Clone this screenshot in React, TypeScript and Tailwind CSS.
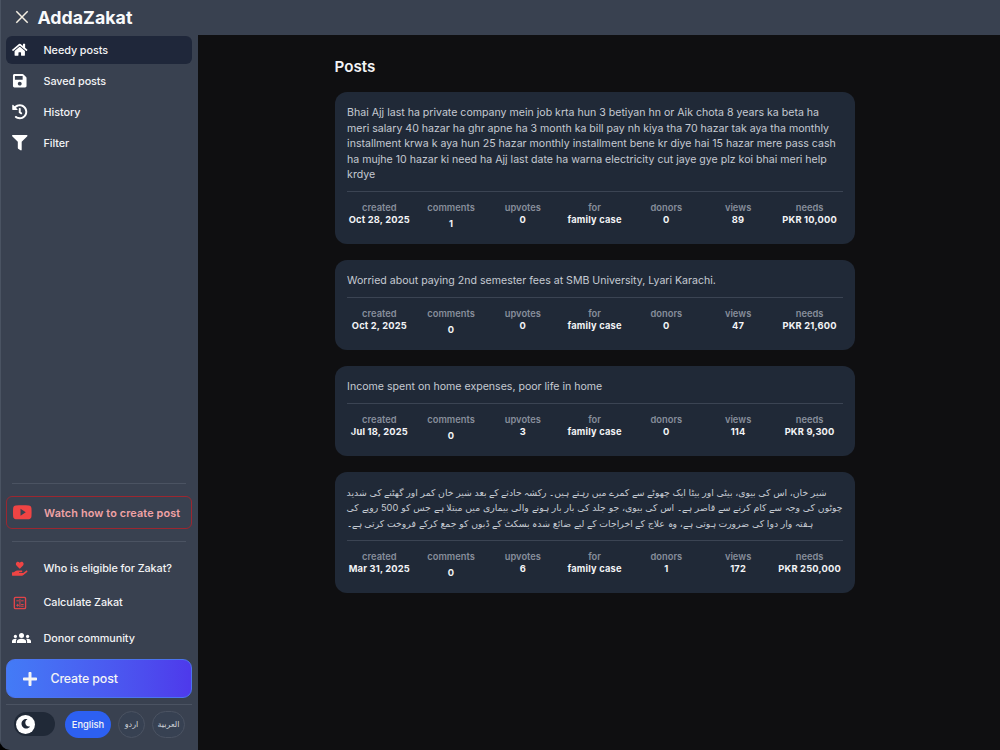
import { FaFilter, FaHandHoldingHeart, FaHistory, FaHome, FaMoon, FaPlus, FaSave } from "react-icons/fa";
import { IoLogoYoutube } from "react-icons/io";

type Post = {
    text?: string;
    lines?: { text: string; width: string }[];
    created: string;
    comments: number;
    upvotes: number;
    donors: number;
    views: number;
    needs: string;
};

const posts: Post[] = [
    {
        text: "Bhai Ajj last ha private company mein job krta hun 3 betiyan hn or Aik chota 8 years ka beta ha meri salary 40 hazar ha ghr apne ha 3 month ka bill pay nh kiya tha 70 hazar tak aya tha monthly installment krwa k aya hun 25 hazar monthly installment bene kr diye hai 15 hazar mere pass cash ha mujhe 10 hazar ki need ha Ajj last date ha warna electricity cut jaye gye plz koi bhai meri help krdye",
        created: "Oct 28, 2025",
        comments: 1,
        upvotes: 0,
        donors: 0,
        views: 89,
        needs: "PKR 10,000",
    },
    {
        text: "Worried about paying 2nd semester fees at SMB University, Lyari Karachi.",
        created: "Oct 2, 2025",
        comments: 0,
        upvotes: 0,
        donors: 0,
        views: 47,
        needs: "PKR 21,600",
    },
    {
        text: "Income spent on home expenses, poor life in home",
        created: "Jul 18, 2025",
        comments: 0,
        upvotes: 3,
        donors: 0,
        views: 114,
        needs: "PKR 9,300",
    },
    {
        lines: [
            { text: "شیر خان، اس کی بیوی، بیٹی اور بیٹا ایک چھوٹے سے کمرے میں رہتے ہیں۔ رکشہ حادثے کے بعد شیر خان کمر اور گھٹنے کی شدید", width: "w-[480px]" },
            { text: "چوٹوں کی وجہ سے کام کرنے سے قاصر ہے۔ اس کی بیوی، جو جلد کی بار بار ہونے والی بیماری میں مبتلا ہے جس کو 500 روپے کی", width: "w-[496px]" },
            { text: "ہفتہ وار دوا کی ضرورت ہوتی ہے، وہ علاج کے اخراجات کے لیے ضائع شدہ بسکٹ کے ڈبوں کو جمع کرکے فروخت کرتی ہے۔", width: "w-[466px]" },
        ],
        created: "Mar 31, 2025",
        comments: 0,
        upvotes: 6,
        donors: 1,
        views: 172,
        needs: "PKR 250,000",
    },
];

const navItems = [
    { label: "Needy posts", icon: FaHome, active: true },
    { label: "Saved posts", icon: FaSave },
    { label: "History", icon: FaHistory },
    { label: "Filter", icon: FaFilter },
];

function CalculatorIcon() {
    return (
        <svg viewBox="0 0 16 16" className="size-[15.5px] text-[#e04449]" fill="none" stroke="currentColor">
            <rect x="2.4" y="2.4" width="11.6" height="11.6" rx="1.2" strokeWidth="1.4" />
            <path d="M4.5 6h2.6M9.4 6H12M5.8 9.2v2.8M4.4 10.6h2.8M9.4 9.8H12M9.4 11.6H12M8.2 4v8.5" strokeWidth="1" />
        </svg>
    );
}

function GroupIcon() {
    return (
        <svg viewBox="0 0 19 10" className="h-[10px] w-[19px] text-white" fill="currentColor">
            <circle cx="9.5" cy="2.6" r="2.5" />
            <circle cx="3.4" cy="3.4" r="1.6" />
            <circle cx="15.6" cy="3.4" r="1.6" />
            <path d="M4.9 10V8.6C4.9 6.8 7 5.8 9.5 5.8s4.6 1 4.6 2.8V10z" />
            <path d="M0 10V8.2c0-1.5 1.4-2.4 3.4-2.4.5 0 .9 0 1.3.1C4.1 6.6 3.9 7.500 3.900 8.4V10z" />
            <path d="M19 10V8.2c0-1.500-1.400-2.400-3.400-2.400-.5 0-.9 0-1.300.1.600.700.800 1.600.800 2.500V10z" />
        </svg>
    );
}

function Stat({ label, value, low }: { label: string; value: string | number; low?: boolean }) {
    return (
        <div className="flex flex-col items-center whitespace-nowrap text-[9.3px] leading-[12.4px] tracking-[0.02em]">
            <span className="font-semibold text-[#878e9b] tracking-[0.005em]">{label}</span>
            <span className={low ? "pt-[4px] font-bold text-[#f3f4f6]" : "font-bold text-[#f3f4f6]"}>{value}</span>
        </div>
    );
}

function PostCard({ post }: { post: Post }) {
    return (
        <article className="rounded-[12px] bg-[#202937] px-[12px] pt-[13px] pb-[12px]">
            {post.text && (
                <p className="pl-[0.5px] text-[10.58px] leading-[15.5px] text-[#c5cad2]">{post.text}</p>
            )}
            {post.lines && (
                <div dir="rtl" className="flex flex-col items-end font-['Inter','DejaVu_Sans',sans-serif] text-[9.3px] leading-[15.5px] text-[#c5cad2]">
                    {post.lines.map((line) => (
                        <p key={line.text} className={`${line.width} h-[15.5px] whitespace-nowrap [text-align-last:justify]`}>
                            {line.text}
                        </p>
                    ))}
                </div>
            )}
            <div className="mt-[8.4px] grid h-[41px] grid-cols-[65.5px_78px_65.5px_78px_65.5px_78px_65px] border-t border-[#3b4453] pt-[10px]">
                <Stat label="created" value={post.created} />
                <Stat label="comments" value={post.comments} low />
                <Stat label="upvotes" value={post.upvotes} />
                <Stat label="for" value="family case" />
                <Stat label="donors" value={post.donors} />
                <Stat label="views" value={post.views} />
                <Stat label="needs" value={post.needs} />
            </div>
        </article>
    );
}

function Sidebar() {
    return (
        <aside className="flex w-[198px] flex-col border-l border-[#4a5362] bg-[#394150] pr-[6px] pl-[5px] text-[10.85px] font-medium tracking-[-0.08px] text-[#f3f4f6]">
            <nav className="flex flex-col gap-[3px] pt-[1px]">
                {navItems.map(({ label, icon: Icon, active }) => (
                    <a
                        key={label}
                        className={`flex h-7 items-center gap-4 rounded-[6px] pl-[6px] ${active ? "bg-[#1f273a]" : ""}`}
                    >
                        <Icon className="size-[15.5px] text-white" />
                        {label}
                    </a>
                ))}
            </nav>
            <div className="mt-auto flex flex-col">
                <hr className="mx-[6px] border-[#4b5362]" />
                <a className="mt-3 flex h-[33px] items-center gap-[12.5px] rounded-[6px] border border-[#9c2730] pl-[6px] font-semibold tracking-[0.12px] text-[#f0a3a6]">
                    <IoLogoYoutube className="size-[18.6px] text-[#ef4444]" />
                    <span className="pt-px">Watch how to create post</span>
                </a>
                <hr className="mx-[6px] mt-3 border-[#4b5362]" />
                <a className="mt-[10.5px] flex h-8 items-center gap-4 pl-[6px]">
                    <FaHandHoldingHeart className="size-[15.5px] text-[#ef4444]" />
                    Who is eligible for Zakat?
                </a>
                <a className="mt-[2px] flex h-8 items-center gap-4 pl-[6px]">
                    <CalculatorIcon />
                    Calculate Zakat
                </a>
                <a className="mt-[3.5px] flex h-8 items-center gap-[12.5px] pl-[6px]">
                    <GroupIcon />
                    Donor community
                </a>
                <button className="mt-[5px] flex h-[39px] items-center gap-[12px] rounded-[9px] border border-[#4b74f0] bg-linear-to-r from-[#437bf6] to-[#4e39eb] pl-[14.5px] text-[12.4px] font-medium tracking-[-0.14px]">
                    <FaPlus className="size-[16px]" />
                    <span className="pt-[2px] pl-px">Create post</span>
                </button>
                <div className="mt-[6px] flex h-[46px] items-start border-t border-[#4b5362] pt-[6px] pl-[8px] text-[9.3px]">
                    <div className="mt-px flex h-[24px] w-[41px] items-center rounded-full bg-[#202937] pl-[2px]">
                        <span className="flex size-[19px] items-center justify-center rounded-full bg-white text-[#202937]">
                            <FaMoon className="size-[9.5px]" />
                        </span>
                    </div>
                    <span className="ml-[10px] flex h-[27px] w-[46px] items-center justify-center rounded-full bg-[#2d60f1] tracking-[0.03px]">English</span>
                    <span className="ml-[7px] flex h-[27px] w-[27px] items-center justify-center rounded-full border border-[#4b5362] bg-[#374152] font-['DejaVu_Sans',sans-serif] text-[8px] text-[#d1d5db] tracking-normal">اردو</span>
                    <span className="ml-[7px] flex h-[27px] w-[33px] items-center justify-center rounded-full border border-[#4b5362] bg-[#374152] font-['DejaVu_Sans',sans-serif] text-[8px] text-[#d1d5db] tracking-normal">العربية</span>
                </div>
            </div>
        </aside>
    );
}

export default function App() {
    return (
        <div className="flex h-[750px] w-[1000px] flex-col overflow-hidden rounded-bl-[10px] bg-[#0f0f11] font-['Inter',sans-serif] shadow-[0_0_0_20px_#000]">
            <header className="flex h-[35px] shrink-0 items-center gap-[8.5px] border-l border-[#4a5362] bg-[#394150] pl-[14px]">
                <svg viewBox="0 0 14 14" className="mb-px size-[14px]" fill="none" stroke="#f4efe2" strokeWidth="1.5">
                    <path d="M1.3 1.3l11.4 11.4M12.7 1.3L1.3 12.7" />
                </svg>
                <h1 className="text-[17.8px] leading-none font-bold text-[#f8f9fb]">AddaZakat</h1>
            </header>
            <div className="flex min-h-0 flex-1">
                <Sidebar />
                <main className="flex-1 pl-[136.6px]">
                    <h2 className="pt-[21px] text-[15.2px] leading-[22px] font-semibold text-[#f3f4f6]">Posts</h2>
                    <div className="mt-[14px] flex w-[520px] flex-col gap-[16px]">
                        {posts.map((post) => (
                            <PostCard key={post.created} post={post} />
                        ))}
                    </div>
                </main>
            </div>
        </div>
    );
}
